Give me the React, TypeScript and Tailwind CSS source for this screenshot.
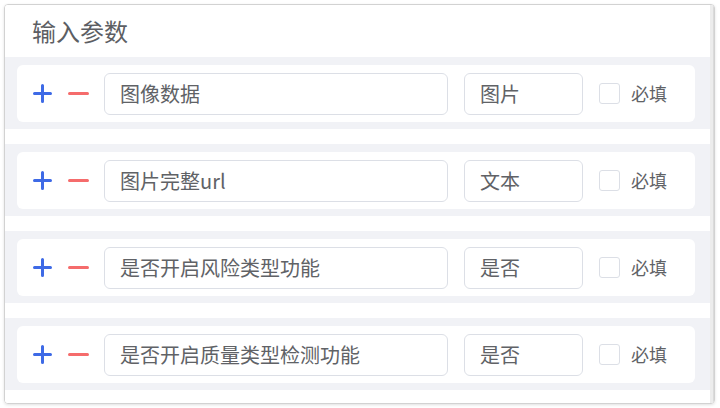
const params = [
  { name: "图像数据", type: "图片" },
  { name: "图片完整url", type: "文本" },
  { name: "是否开启风险类型功能", type: "是否" },
  { name: "是否开启质量类型检测功能", type: "是否" },
];

function PlusIcon() {
  return (
    <svg width="19" height="19" viewBox="0 0 19 19" className="shrink-0">
      <path d="M9.5 1.5v16M1.5 9.5h16" stroke="#3e6ae6" strokeWidth="3" strokeLinecap="round" />
    </svg>
  );
}

function MinusIcon() {
  return (
    <svg width="21" height="19" viewBox="0 0 21 19" className="shrink-0">
      <path d="M1.5 9.5h18" stroke="#f56c6c" strokeWidth="3" strokeLinecap="round" />
    </svg>
  );
}

export default function App() {
  return (
    <div
      className="w-[720px] h-[408px] bg-white pl-[4px] pt-[4px]"
      style={{ fontFamily: '"Noto Sans CJK SC", "Noto Sans", sans-serif' }}
    >
      <div className="w-[711px] h-[400px] flex border border-[#d2d2d2] rounded-[4px] shadow-[0_1px_3px_rgba(0,0,0,0.12)] overflow-hidden">
        <div className="flex-1 flex flex-col bg-white">
          {/* Header */}
          <div className="h-[52px] pl-[27px] flex items-center text-[24px] text-[#5c5e63]">
            输入参数
          </div>

          {/* Param rows */}
          <div className="flex flex-col gap-[15px]">
            {params.map((p) => (
              <div key={p.name} className="bg-[#f1f2f6] pt-2 pb-[7px] pl-3 pr-[15px]">
                <div className="h-[57px] bg-white rounded-md flex items-center pl-4">
                  <PlusIcon />
                  <div className="ml-[16px]">
                    <MinusIcon />
                  </div>
                  <div className="ml-[15px] w-[344px] h-[42px] border border-[#dcdfe6] rounded-md flex items-center pl-[15px] text-[20px] text-[#606266]">
                    {p.name}
                  </div>
                  <div className="ml-4 w-[119px] h-[42px] border border-[#dcdfe6] rounded-md flex items-center pl-[15px] text-[20px] text-[#606266]">
                    {p.type}
                  </div>
                  <div className="ml-4 w-[21px] h-[21px] border border-[#dcdfe6] rounded-[3px] bg-white" />
                  <span className="ml-[11px] text-[18px] text-[#606266]">必填</span>
                </div>
              </div>
            ))}
          </div>
        </div>
        {/* Scroll track */}
        <div className="w-[4px] bg-[#ececec] border-r border-[#dadada]" />
      </div>
    </div>
  );
}
